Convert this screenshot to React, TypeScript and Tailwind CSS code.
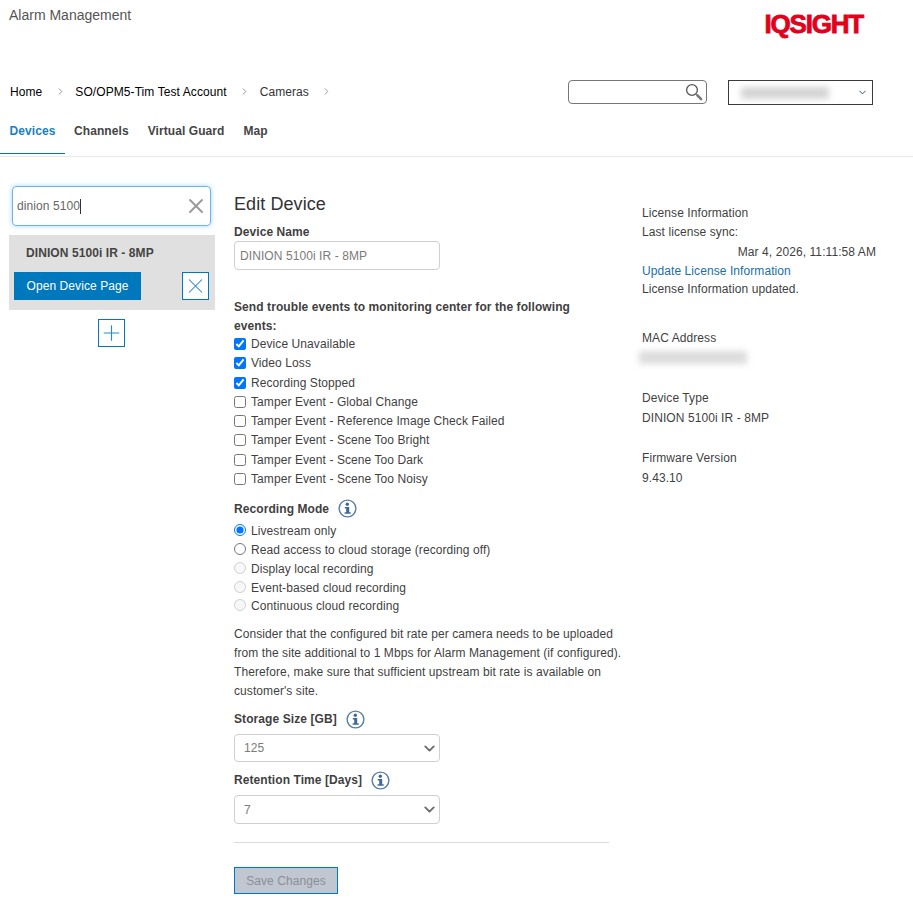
import { ChevronDown, ChevronRight, Plus, X } from "lucide-react";

const events = [
  { label: "Device Unavailable", checked: true },
  { label: "Video Loss", checked: true },
  { label: "Recording Stopped", checked: true },
  { label: "Tamper Event - Global Change", checked: false },
  { label: "Tamper Event - Reference Image Check Failed", checked: false },
  { label: "Tamper Event - Scene Too Bright", checked: false },
  { label: "Tamper Event - Scene Too Dark", checked: false },
  { label: "Tamper Event - Scene Too Noisy", checked: false },
];

const modes = [
  { label: "Livestream only", checked: true, disabled: false },
  { label: "Read access to cloud storage (recording off)", checked: false, disabled: false },
  { label: "Display local recording", checked: false, disabled: true },
  { label: "Event-based cloud recording", checked: false, disabled: true },
  { label: "Continuous cloud recording", checked: false, disabled: true },
];

function InfoIcon() {
  return (
    <svg width="19" height="19" viewBox="0 0 19 19" fill="none" className="shrink-0">
      <circle cx="9.5" cy="9.5" r="8.4" stroke="#5a7fa3" strokeWidth="1.4" />
      <circle cx="9.3" cy="5.2" r="1.7" fill="#3f6a94" />
      <path d="M6.8 8h4.4v5.2h1.5v1.6H6.6v-1.6h1.6V9.6H6.8z" fill="#3f6a94" />
    </svg>
  );
}

function MagnifierIcon() {
  return (
    <svg width="18" height="18" viewBox="0 0 18 18" fill="none">
      <circle cx="7" cy="7" r="5.4" stroke="#555" strokeWidth="1.3" />
      <path d="M11 11l1.6 1.6" stroke="#888" strokeWidth="1.4" />
      <path d="M12.4 12.4l3.7 3.7" stroke="#777" strokeWidth="2.6" strokeLinecap="round" />
    </svg>
  );
}

function FakeSelect({ value }: { value: string }) {
  return (
    <div className="flex h-full w-[206px] items-center justify-between rounded-[4px] border border-[#cfcfcf] bg-white pl-[9px] pr-[1px] text-[#7b7b7b]">
      <span>{value}</span>
      <ChevronDown size={17} strokeWidth={2.6} className="text-[#6b6b6b]" />
    </div>
  );
}

export default function App() {
  return (
    <div
      className="h-[901px] w-[913px] overflow-hidden bg-white text-[12px] tracking-[0.08px] text-[#3f3f3f]"
      style={{ fontFamily: '"Liberation Sans", Arial, sans-serif' }}
    >
      {/* Title + logo */}
      <header className="flex h-[80px] items-start justify-between pl-[9px] pr-[50px]">
        <h1 className="mt-[6px] text-[14px] leading-[18px] tracking-normal text-[#555]">Alarm Management</h1>
        <span className="mt-[9px] text-[26px] font-bold leading-[30px] tracking-[-1.2px] text-[#e2001a] [-webkit-text-stroke:0.8px_#e2001a]">
          IQSIGHT
        </span>
      </header>

      {/* Breadcrumb + search */}
      <div className="flex h-[25px] items-start pl-[10px]">
        <nav className="flex h-[23px] w-[558px] items-center text-black">
          <span>Home</span>
          <ChevronRight size={11} className="ml-[13px] mr-[9px] text-[#8f8f8f]" />
          <span>SO/OPM5-Tim Test Account</span>
          <ChevronRight size={11} className="ml-[12px] mr-[10px] text-[#8f8f8f]" />
          <span className="text-[#333]">Cameras</span>
          <ChevronRight size={11} className="ml-[12px] text-[#8f8f8f]" />
        </nav>
        <div className="flex h-[24px] w-[139px] items-center justify-end rounded-[4px] border border-[#777] pr-[3px]">
          <MagnifierIcon />
        </div>
        <div className="ml-[21px] flex h-[25px] w-[145px] items-center justify-between border border-[#3a3a3a] pl-[12px] pr-[4px]">
          <div className="h-[12px] w-[88px] bg-[#d4d4d4] blur-[3px]" />
          <ChevronDown size={11} strokeWidth={2} className="text-[#1f3f66]" />
        </div>
      </div>

      {/* Tabs */}
      <div className="mt-[11px] flex h-[41px] border-b border-[#e9e9e9] font-bold text-[#444]">
        <div className="flex h-[38px] w-[65px] items-start justify-center border-b border-[#0f6fae] pt-[6px] text-[#1a7fc0]">
          Devices
        </div>
        <div className="ml-[9px] flex gap-[19px] pt-[6px]">
          <span>Channels</span>
          <span>Virtual Guard</span>
          <span>Map</span>
        </div>
      </div>

      <div className="flex">
        {/* Device list */}
        <aside className="ml-[9px] mt-[29px] w-[206px]">
          <div className="mx-[3px] flex h-[40px] w-[199px] items-center justify-between rounded-[4px] border border-[#6db3f0] pl-[4px] pr-[2px] text-[#666] shadow-[0_0_5px_#a9d4f8]">
            <span className="border-r border-[#333] leading-[15px]">dinion 5100</span>
            <X size={24} strokeWidth={2} className="text-[#9a9a9a]" />
          </div>
          <div className="mt-[9px] h-[75px] bg-[#e0e0e0] px-[5px] pt-[11px]">
            <div className="pl-[12px] font-bold leading-[15px] text-[#444]">DINION 5100i IR - 8MP</div>
            <div className="mt-[11px] flex items-center justify-between pr-[1px]">
              <button className="h-[28px] w-[127px] bg-[#0078be] text-white">Open Device Page</button>
              <button className="flex h-[28px] w-[27px] items-center justify-center border border-[#0078be] bg-white">
                <X size={26} strokeWidth={1} className="text-[#2a88c8]" />
              </button>
            </div>
          </div>
          <button className="ml-[89px] mt-[9px] flex h-[28px] w-[27px] items-center justify-center border border-[#0078be] bg-white">
            <Plus size={26} strokeWidth={1.1} className="text-[#2a88c8]" />
          </button>
        </aside>

        {/* Edit form */}
        <main className="ml-[19px] mt-[36px] w-[390px]">
          <h2 className="text-[18px] leading-[22px] text-[#333]">Edit Device</h2>
          <label className="mt-[10px] block font-bold leading-[14px]">Device Name</label>
          <div className="mt-[2px] flex h-[29px] w-[206px] items-center rounded-[4px] border border-[#cfcfcf] pl-[5px] text-[#7b7b7b]">
            DINION 5100i IR - 8MP
          </div>
          <p className="mt-[28px] w-[375px] font-bold leading-[19px]">
            Send trouble events to monitoring center for the following events:
          </p>
          <div className="mt-[-1.5px]">
            {events.map((e) => (
              <label key={e.label} className="flex h-[19.25px] items-center">
                <input type="checkbox" defaultChecked={e.checked} className="m-0 mr-[5px] h-[12px] w-[12px]" />
                {e.label}
              </label>
            ))}
          </div>
          <div className="mt-[8px] flex h-[24px] items-center font-bold">
            Recording Mode
            <span className="ml-[9px]">
              <InfoIcon />
            </span>
          </div>
          <div className="mt-[1.5px]">
            {modes.map((m) => (
              <label key={m.label} className="flex h-[18.75px] items-center">
                <input
                  type="radio"
                  name="mode"
                  defaultChecked={m.checked}
                  disabled={m.disabled}
                  className="m-0 mr-[5px] h-[12px] w-[12px] -translate-y-px"
                />
                {m.label}
              </label>
            ))}
          </div>
          <p className="mt-[9.25px] leading-[19px]">
            Consider that the configured bit rate per camera needs to be uploaded from the site additional to 1 Mbps for
            Alarm Management (if configured). Therefore, make sure that sufficient upstream bit rate is available on
            customer's site.
          </p>
          <div className="mt-[6px] flex h-[24px] items-center font-bold">
            Storage Size [GB]
            <span className="ml-[9px]">
              <InfoIcon />
            </span>
          </div>
          <div className="mt-[3px] h-[28px]">
            <FakeSelect value="125" />
          </div>
          <div className="mt-[6px] flex h-[24px] items-center font-bold">
            Retention Time [Days]
            <span className="ml-[9px]">
              <InfoIcon />
            </span>
          </div>
          <div className="mt-[3px] h-[29px]">
            <FakeSelect value="7" />
          </div>
          <div className="mt-[18px] w-[375px] border-t border-[#dcdcdc]" />
          <button className="mt-[24px] h-[27px] w-[104px] border border-[#0078be] bg-[#c1c7d0] text-[#8a8f98]">
            Save Changes
          </button>
        </main>

        {/* License + device info */}
        <section className="ml-[18px] mt-[47px] w-[234px] leading-[18px]">
          <div className="h-[19px]">License Information</div>
          <div className="h-[20px]">Last license sync:</div>
          <div className="h-[19px] text-right">Mar 4, 2026, 11:11:58 AM</div>
          <div className="h-[18px] text-[#1a6ea8]">Update License Information</div>
          <div>License Information updated.</div>
          <div className="mt-[31px] h-[20px]">MAC Address</div>
          <div className="-ml-[3px] mt-[2px] h-[13px] w-[108px] bg-[#dcdcdc] blur-[3px]" />
          <div className="mt-[25px] h-[20px]">Device Type</div>
          <div>DINION 5100i IR - 8MP</div>
          <div className="mt-[22px] h-[20px]">Firmware Version</div>
          <div>9.43.10</div>
        </section>
      </div>
    </div>
  );
}
